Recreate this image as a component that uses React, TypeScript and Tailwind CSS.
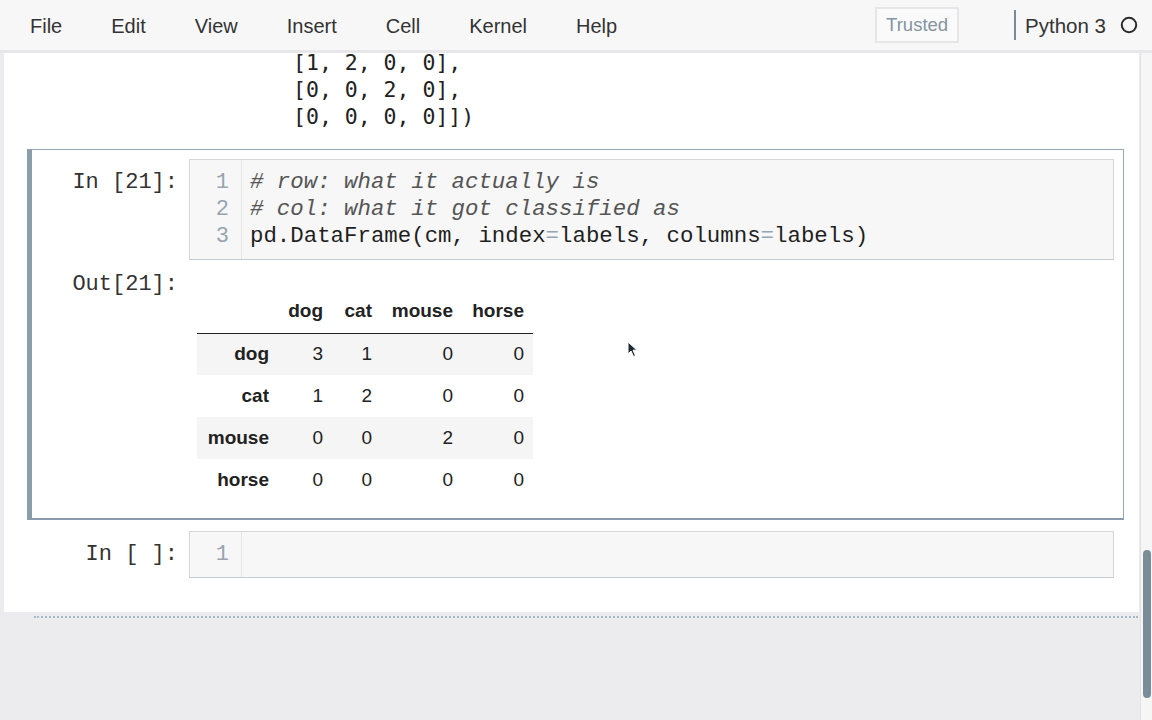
import React from "react";

const mono = "font-['Liberation_Mono','Courier_New',monospace]";
const sans = "font-['Liberation_Sans',Arial,sans-serif]";

function InputArea({ lines }: { lines: React.ReactNode[] }) {
  return (
    <div className="flex-1 flex bg-[#f7f7f7] border border-[#d6d6d6] border-b-[#c2ccd4]">
      <div className={`w-[52px] shrink-0 border-r border-[#e6e6e6] pt-[9px] pb-[9px] pr-[12px] text-right text-[#97a5b1] text-[22px] leading-[27px] ${mono}`}>
        {lines.map((_, i) => (
          <div key={i}>{i + 1}</div>
        ))}
      </div>
      <div className={`flex-1 pt-[9px] pb-[9px] pl-[8px] text-[22.4px] leading-[27px] text-[#1f1f1f] whitespace-pre ${mono}`}>
        {lines.map((l, i) => (
          <div key={i} className="h-[27px]">{l}</div>
        ))}
      </div>
    </div>
  );
}

const header = ["dog", "cat", "mouse", "horse"];
const rows: [string, number[]][] = [
  ["dog", [3, 1, 0, 0]],
  ["cat", [1, 2, 0, 0]],
  ["mouse", [0, 0, 2, 0]],
  ["horse", [0, 0, 0, 0]],
];
const colW = ["w-[54px]", "w-[49px]", "w-[81px]", "w-[68px]"];

export default function App() {
  return (
    <div className={`w-[1152px] h-[720px] overflow-hidden relative flex flex-col bg-[#ececee] ${sans}`}>
      {/* Menubar */}
      <div className="h-[53px] shrink-0 bg-[#f7f7f7] border-b-[3px] border-[#e7e7e9] flex items-center text-[20px] text-[#333]">
        <div className="flex gap-[49px] pl-[30px] pt-[2px]">
          <span>File</span>
          <span>Edit</span>
          <span>View</span>
          <span>Insert</span>
          <span>Cell</span>
          <span>Kernel</span>
          <span>Help</span>
        </div>
        <div className="ml-auto flex items-center mr-[14px]">
          <div className="h-[36px] w-[84px] border-2 border-[#e6e6e8] bg-[#fafafa] flex items-center justify-center text-[18.5px] text-[#8494a1]">
            Trusted
          </div>
          <div className="w-[2px] h-[30px] bg-[#7a8b98] ml-[55px] mr-[9px]" />
          <span className="text-[20.5px] text-[#333] pt-[2px]">Python 3</span>
          <svg width="18" height="18" viewBox="0 0 18 18" className="ml-[14px]">
            <circle cx="9" cy="9" r="7.2" fill="none" stroke="#2b2b2b" strokeWidth="2" />
          </svg>
        </div>
      </div>

      <div className="flex flex-1 min-h-0">
        <div className="flex flex-col w-[1140px]">
          {/* Notebook panel */}
          <div className="ml-[4px] w-[1135px] h-[559px] bg-white overflow-hidden flex flex-col">
            {/* previous output */}
            <div className="-mt-[4px] pl-[289px] text-[21.5px] leading-[27px] text-[#222] whitespace-pre font-['DejaVu_Sans_Mono',monospace]">
              <div>[1, 2, 0, 0],</div>
              <div>[0, 0, 2, 0],</div>
              <div>[0, 0, 0, 0]])</div>
            </div>

            {/* selected cell */}
            <div className="mt-[19px] ml-[23px] mr-[15px] border-l-[5px] border-t border-r border-b-2 border-t-[#98a9b6] border-r-[#98a9b6] border-b-[#8a9cab] border-l-[#8a9dab] pt-[9px] pr-[9px] pb-[17px]">
              <div className="flex">
                <div className={`w-[157px] shrink-0 pr-[11px] pt-[10px] text-right text-[22px] leading-[27px] text-[#333] ${mono}`}>
                  In [21]:
                </div>
                <InputArea
                  lines={[
                    <span className="italic text-[#555]"># row: what it actually is</span>,
                    <span className="italic text-[#555]"># col: what it got classified as</span>,
                    <span>
                      pd.DataFrame(cm, index<span className="text-[#93a6b5]">=</span>labels, columns
                      <span className="text-[#93a6b5]">=</span>labels)
                    </span>,
                  ]}
                />
              </div>
              <div className="flex mt-[11px]">
                <div className={`w-[157px] shrink-0 pr-[11px] text-right text-[22px] leading-[27px] text-[#333] ${mono}`}>
                  Out[21]:
                </div>
                <div className="pl-[8px] pt-[19px]">
                  <table className={`border-collapse text-[19px] text-[#222] ${sans}`}>
                    <thead>
                      <tr className="h-[43px] border-b border-[#222]">
                        <th className="w-[84px]" />
                        {header.map((h, i) => (
                          <th key={h} className={`${colW[i]} text-right font-bold ${i === 3 ? "pr-[9px]" : "pr-[12px]"} align-middle`}>
                            {h}
                          </th>
                        ))}
                      </tr>
                    </thead>
                    <tbody>
                      {rows.map(([name, vals], r) => (
                        <tr key={name} className={`h-[42px] ${r % 2 === 0 ? "bg-[#f5f5f5]" : ""}`}>
                          <th className="text-right font-bold pr-[12px]">{name}</th>
                          {vals.map((v, i) => (
                            <td key={i} className={`text-right ${i === 3 ? "pr-[9px]" : "pr-[12px]"}`}>
                              {v}
                            </td>
                          ))}
                        </tr>
                      ))}
                    </tbody>
                  </table>
                </div>
              </div>
            </div>

            {/* empty cell */}
            <div className="ml-[23px] mr-[15px] border-l-[5px] border border-transparent pt-[10px] pr-[9px]">
              <div className="flex">
                <div className={`w-[157px] shrink-0 pr-[11px] pt-[10px] text-right text-[22px] leading-[27px] text-[#333] ${mono}`}>
                  In [ ]:
                </div>
                <InputArea lines={[<span>{""}</span>]} />
              </div>
            </div>
          </div>
          <div className="mt-[4px] ml-[34px] mr-[2px] border-t-2 border-dotted border-[#a9b8c5]" />
        </div>

        {/* scrollbar */}
        <div className="flex-1 flex flex-col bg-[#f6f6f7] border-l border-[#e2e2e4] relative">
          <div className="flex-1" />
          <div className="absolute left-[2px] w-[8px] top-[497px] h-[148px] rounded-full bg-[#7b8c99]" />
        </div>
      </div>

      {/* mouse cursor */}
      <svg className="absolute left-[627px] top-[341px]" width="11" height="17" viewBox="0 0 11 17">
        <path d="M1 1 L1 13 L4 10 L6.5 15.5 L8.5 14.5 L6 9.2 L10 9.2 Z" fill="#1e2a33" stroke="#ffffff" strokeWidth="1" />
      </svg>
    </div>
  );
}
